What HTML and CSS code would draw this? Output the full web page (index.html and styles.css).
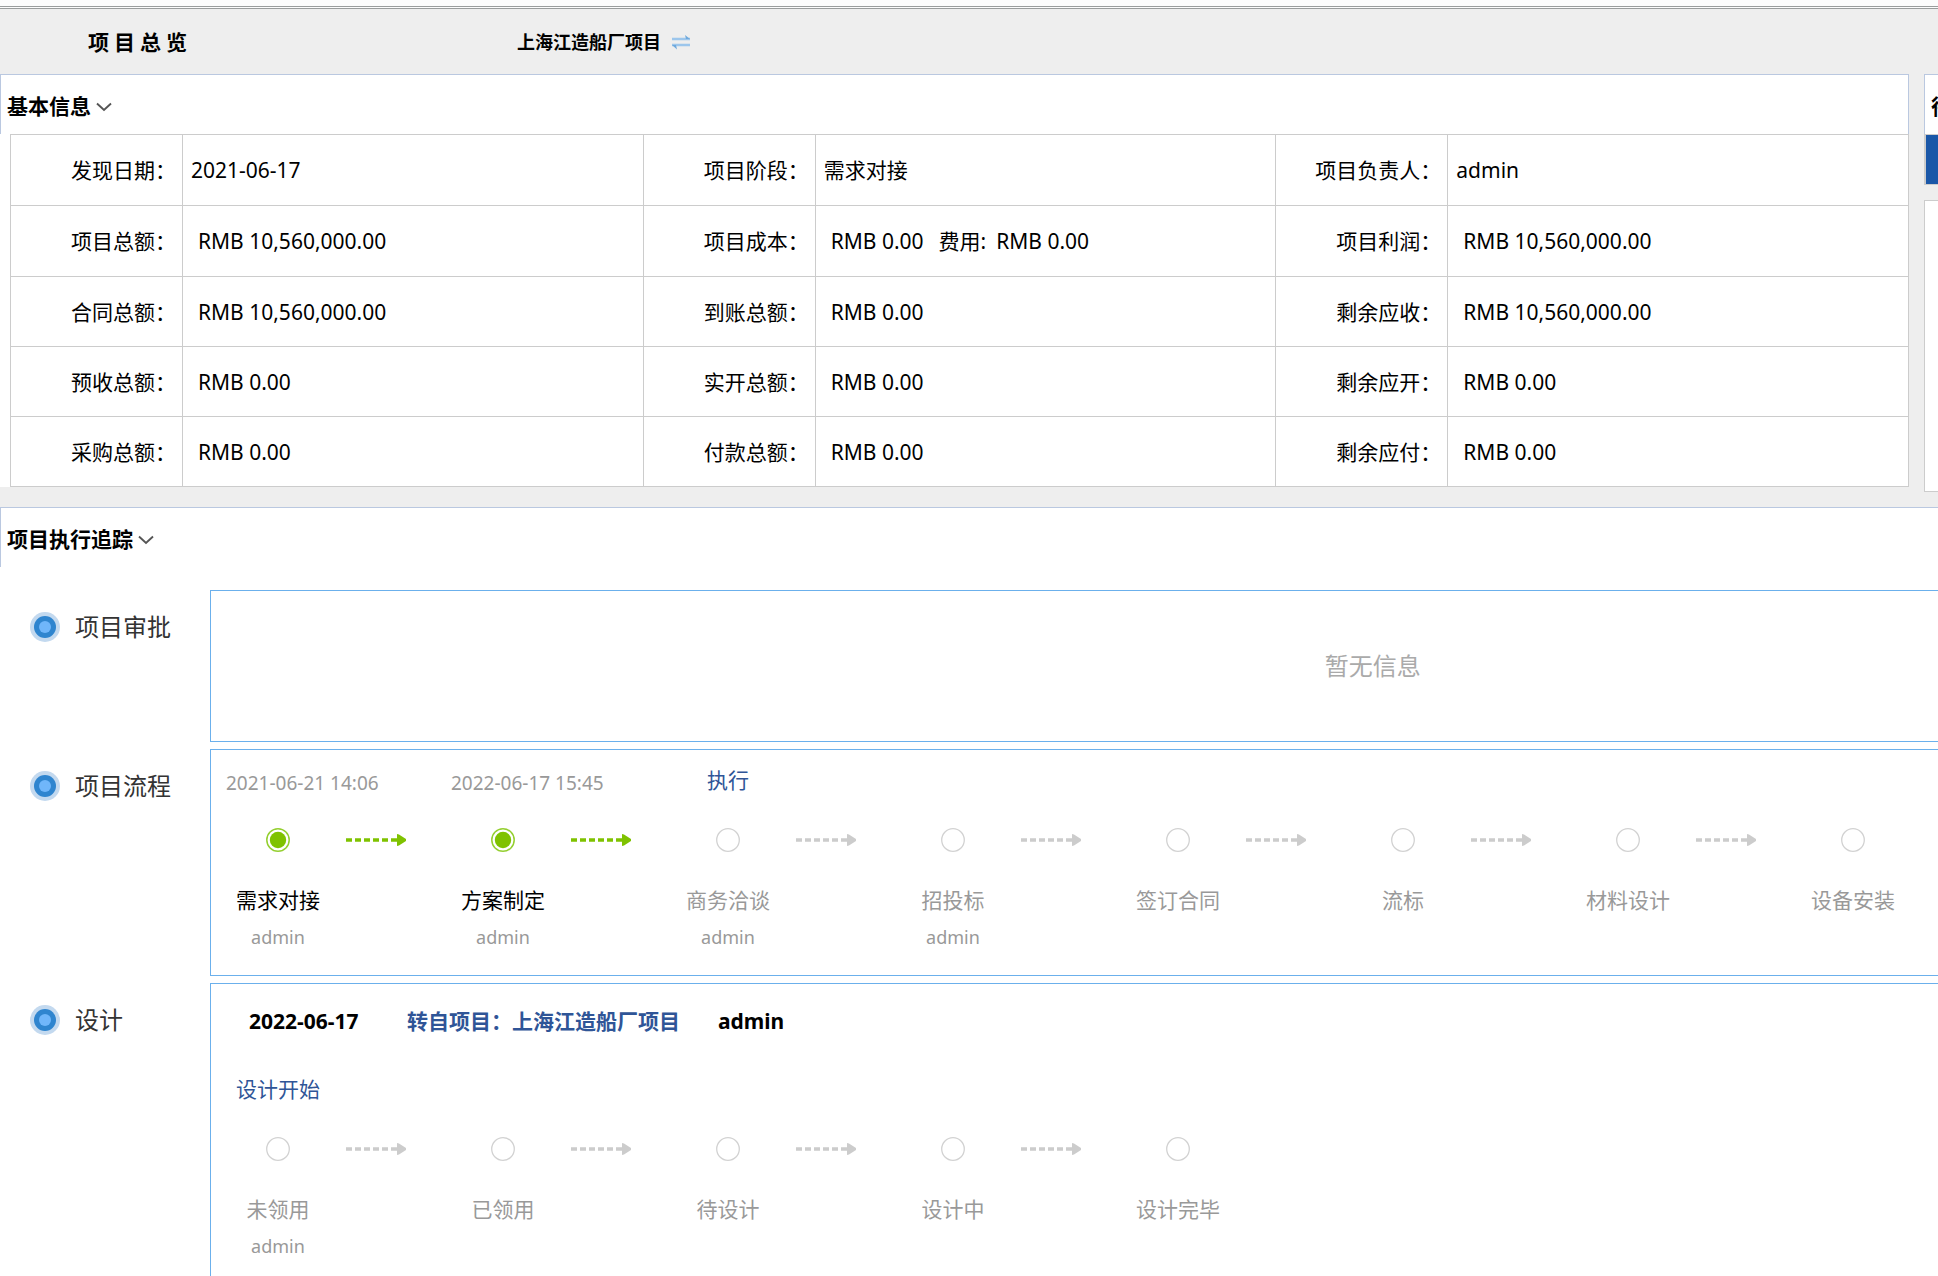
FILE: index.html
```html
<!DOCTYPE html>
<html lang="zh-CN">
<head>
<meta charset="utf-8">
<title>项目总览</title>
<link rel="stylesheet" href="styles.css">
</head>
<body>
<svg class="defs" aria-hidden="true">
  <symbol id="chevron" viewBox="0 0 16 10"><path d="M1 1.500 8 8 15 1.500" fill="none" stroke="#555" stroke-width="1.9"/></symbol>
  <symbol id="bullet" viewBox="0 0 30 30"><circle cx="15" cy="15" r="15" fill="#c3d9ef"/><circle cx="15" cy="15" r="11" fill="#2f85cf"/><circle cx="15" cy="15" r="6" fill="#70b6fa"/></symbol>
  <symbol id="node" viewBox="0 0 24 24"><circle cx="12" cy="12" r="11.3" fill="#fff" stroke="#d2d2d2" stroke-width="1.3"/></symbol>
  <symbol id="node-done" viewBox="0 0 24 24"><circle cx="12" cy="12" r="11.2" fill="#fff" stroke="#94cf30" stroke-width="1.5"/><circle cx="12" cy="12" r="8.2" fill="#7fc200"/></symbol>
  <symbol id="arrow" viewBox="0 0 60 12"><path d="M0 6h6M9 6h6M18 6h6M27 6h6M36 6h6M45 6h7" stroke="currentColor" stroke-width="3.4"/><path d="M51 0v12l2-.4L60 7V5L53 .4z" fill="currentColor"/></symbol>
</svg>
<div class="page">
  <div class="topline"></div>
  <header class="header">
    <h1 class="title">项目总览</h1>
    <strong class="project">上海江造船厂项目</strong>
    <button class="icon-btn" type="button" aria-label="切换项目">
      <svg width="20" height="16" viewBox="0 0 20 16"><path d="M1 5h18M1 11h18" stroke="#9cc6ec" stroke-width="2.6"/><path d="M14 1l5 4h-4zM6 15.500l-5-4.500h4z" fill="#6fa9dc"/></svg>
    </button>
  </header>

  <div class="overview">
    <section class="panel">
      <div class="panel-head">
        <h2>基本信息</h2>
        <button class="icon-btn" type="button" aria-label="折叠基本信息"><svg width="16" height="10"><use href="#chevron"/></svg></button>
      </div>
      <table class="info">
        <colgroup><col class="c-label"><col><col class="c-label"><col><col class="c-label"><col></colgroup>
        <tr><th>发现日期：</th><td>2021-06-17</td><th>项目阶段：</th><td>需求对接</td><th>项目负责人：</th><td>admin</td></tr>
        <tr><th>项目总额：</th><td class="money">RMB 10,560,000.00</td><th>项目成本：</th><td class="money"><span>RMB 0.00</span><span class="fee">费用:</span><span>RMB 0.00</span></td><th>项目利润：</th><td class="money">RMB 10,560,000.00</td></tr>
        <tr><th>合同总额：</th><td class="money">RMB 10,560,000.00</td><th>到账总额：</th><td class="money">RMB 0.00</td><th>剩余应收：</th><td class="money">RMB 10,560,000.00</td></tr>
        <tr><th>预收总额：</th><td class="money">RMB 0.00</td><th>实开总额：</th><td class="money">RMB 0.00</td><th>剩余应开：</th><td class="money">RMB 0.00</td></tr>
        <tr><th>采购总额：</th><td class="money">RMB 0.00</td><th>付款总额：</th><td class="money">RMB 0.00</td><th>剩余应付：</th><td class="money">RMB 0.00</td></tr>
      </table>
    </section>
    <aside class="side">
      <div class="panel-head"><h2>待</h2></div>
      <div class="side-tab"></div>
      <div class="side-list"></div>
    </aside>
  </div>

  <section class="track">
    <div class="panel-head">
      <h2>项目执行追踪</h2>
      <button class="icon-btn" type="button" aria-label="折叠项目执行追踪"><svg width="16" height="10"><use href="#chevron"/></svg></button>
    </div>
    <div class="rows">
      <div class="row">
        <h3 class="row-name"><svg width="30" height="30"><use href="#bullet"/></svg>项目审批</h3>
        <div class="box box-empty">暂无信息</div>
      </div>
      <div class="row">
        <h3 class="row-name"><svg width="30" height="30"><use href="#bullet"/></svg>项目流程</h3>
        <div class="box">
          <ol class="steps">
            <li class="step done"><div class="when">2021-06-21 14:06</div><svg class="node"><use href="#node-done"/></svg><div class="name">需求对接</div><div class="who">admin</div></li>
            <li class="link done"><svg width="60" height="12"><use href="#arrow"/></svg></li>
            <li class="step done"><div class="when">2022-06-17 15:45</div><svg class="node"><use href="#node-done"/></svg><div class="name">方案制定</div><div class="who">admin</div></li>
            <li class="link done"><svg width="60" height="12"><use href="#arrow"/></svg></li>
            <li class="step"><div class="act"><a href="#">执行</a></div><svg class="node"><use href="#node"/></svg><div class="name">商务洽谈</div><div class="who">admin</div></li>
            <li class="link"><svg width="60" height="12"><use href="#arrow"/></svg></li>
            <li class="step"><div class="act"></div><svg class="node"><use href="#node"/></svg><div class="name">招投标</div><div class="who">admin</div></li>
            <li class="link"><svg width="60" height="12"><use href="#arrow"/></svg></li>
            <li class="step"><div class="act"></div><svg class="node"><use href="#node"/></svg><div class="name">签订合同</div></li>
            <li class="link"><svg width="60" height="12"><use href="#arrow"/></svg></li>
            <li class="step"><div class="act"></div><svg class="node"><use href="#node"/></svg><div class="name">流标</div></li>
            <li class="link"><svg width="60" height="12"><use href="#arrow"/></svg></li>
            <li class="step"><div class="act"></div><svg class="node"><use href="#node"/></svg><div class="name">材料设计</div></li>
            <li class="link"><svg width="60" height="12"><use href="#arrow"/></svg></li>
            <li class="step"><div class="act"></div><svg class="node"><use href="#node"/></svg><div class="name">设备安装</div></li>
          </ol>
        </div>
      </div>
      <div class="row">
        <h3 class="row-name"><svg width="30" height="30"><use href="#bullet"/></svg>设计</h3>
        <div class="box">
          <div class="source"><span class="source-date">2022-06-17</span><a href="#">转自项目：上海江造船厂项目</a><span>admin</span></div>
          <ol class="steps">
            <li class="step"><div class="act"><a href="#">设计开始</a></div><svg class="node"><use href="#node"/></svg><div class="name">未领用</div><div class="who">admin</div></li>
            <li class="link"><svg width="60" height="12"><use href="#arrow"/></svg></li>
            <li class="step"><div class="act"></div><svg class="node"><use href="#node"/></svg><div class="name">已领用</div></li>
            <li class="link"><svg width="60" height="12"><use href="#arrow"/></svg></li>
            <li class="step"><div class="act"></div><svg class="node"><use href="#node"/></svg><div class="name">待设计</div></li>
            <li class="link"><svg width="60" height="12"><use href="#arrow"/></svg></li>
            <li class="step"><div class="act"></div><svg class="node"><use href="#node"/></svg><div class="name">设计中</div></li>
            <li class="link"><svg width="60" height="12"><use href="#arrow"/></svg></li>
            <li class="step"><div class="act"></div><svg class="node"><use href="#node"/></svg><div class="name">设计完毕</div></li>
          </ol>
        </div>
      </div>
    </div>
  </section>
</div>
</body>
</html>
```
FILE: styles.css
```css
* { box-sizing: border-box; }
body {
  margin: 0;
  background: #eee;
  color: #000;
  font: 21px/30px "Noto Sans", "Noto Sans CJK SC", sans-serif;
}
h1, h2, h3, ol { margin: 0; padding: 0; font: inherit; }
ol { list-style: none; }
a { color: #2f5597; text-decoration: none; }
svg { display: block; flex: none; }
.defs { display: none; }
.page { height: 100vh; overflow: hidden; }

.topline {
  height: 9px;
  background: #fcfcfc;
  border-bottom: 3px double #9a9d9d;
}
.header {
  display: flex;
  align-items: center;
  height: 65px;
  padding: 0 0 0 88px;
}
.title { width: 429px; font-weight: 700; letter-spacing: 5px; }
.project { font-size: 18px; }
.icon-btn {
  display: flex;
  padding: 0;
  border: 0;
  background: none;
  cursor: pointer;
}
.header .icon-btn { margin-left: 10px; }

.overview {
  display: grid;
  grid-template-columns: calc(100vw - 29px) 25vw;
  column-gap: 15px;
  align-items: start;
}
.panel, .track { background: #fff; }
.panel-head {
  display: flex;
  align-items: center;
  gap: 5px;
  height: 60px;
  padding: 2px 0 0 6px;
  background: #fff;
  border: 1px solid #bac8e0;
  border-bottom: 0;
}
.panel-head h2 { font-weight: 700; }
.panel-head .icon-btn { padding-top: 2px; }

.info {
  width: calc(100% - 10px);
  margin-left: 10px;
  border-collapse: collapse;
  table-layout: fixed;
}
.c-label { width: 172px; }
.info tr { height: 70px; }
.info tr:nth-child(-n+2) { height: 71px; }
.info th, .info td {
  padding: 0 0 0 8px;
  border: 1px solid #ccc;
  text-align: left;
  white-space: nowrap;
}
.info th { padding: 0 6px 0 0; font-weight: 400; text-align: right; }
.info .money { padding-left: 15px; }
.fee { margin: 0 10px 0 15px; }

.side-tab { height: 51px; background: #1a57a8; border: 1px solid #ccc; border-left-width: 2px; }
.side-list { height: 292px; margin-top: 15px; background: #fff; border: 1px solid #ccc; }

.track { margin-top: 15px; }
.track .panel-head { border-right: 0; }
.rows { display: grid; gap: 7px; padding-top: 23px; }
.row { display: grid; grid-template-columns: 210px 120vw; }
.row-name {
  display: flex;
  gap: 15px;
  padding: 22px 0 0 30px;
  color: #333;
  font-size: 24px;
}
.box { border: 1px solid #6bb0ec; }
.box-empty {
  display: grid;
  place-items: center;
  height: 152px;
  color: #aaa;
  font-size: 24px;
}
.steps { display: flex; height: 225px; padding: 15px 0 0 15px; }
.step {
  display: flex;
  flex: none;
  flex-direction: column;
  align-items: center;
  width: 104px;
  color: #999;
  white-space: nowrap;
}
.when, .act { height: 30px; margin-bottom: 33px; }
.when { align-self: flex-start; font-size: 19px; line-height: 36px; }
.node { width: 24px; height: 24px; margin-bottom: 33px; }
.done .name { color: #000; }
.who { margin-top: 7px; font-size: 18px; }
.link { flex: none; width: 121px; padding: 69px 0 0 16px; color: #ccc; }
.link.done { color: #7fc200; }
.source {
  display: flex;
  gap: 38px;
  padding: 22px 0 0 38px;
  height: 75px;
  font-weight: 700;
}
.source-date { min-width: 120px; }
```
